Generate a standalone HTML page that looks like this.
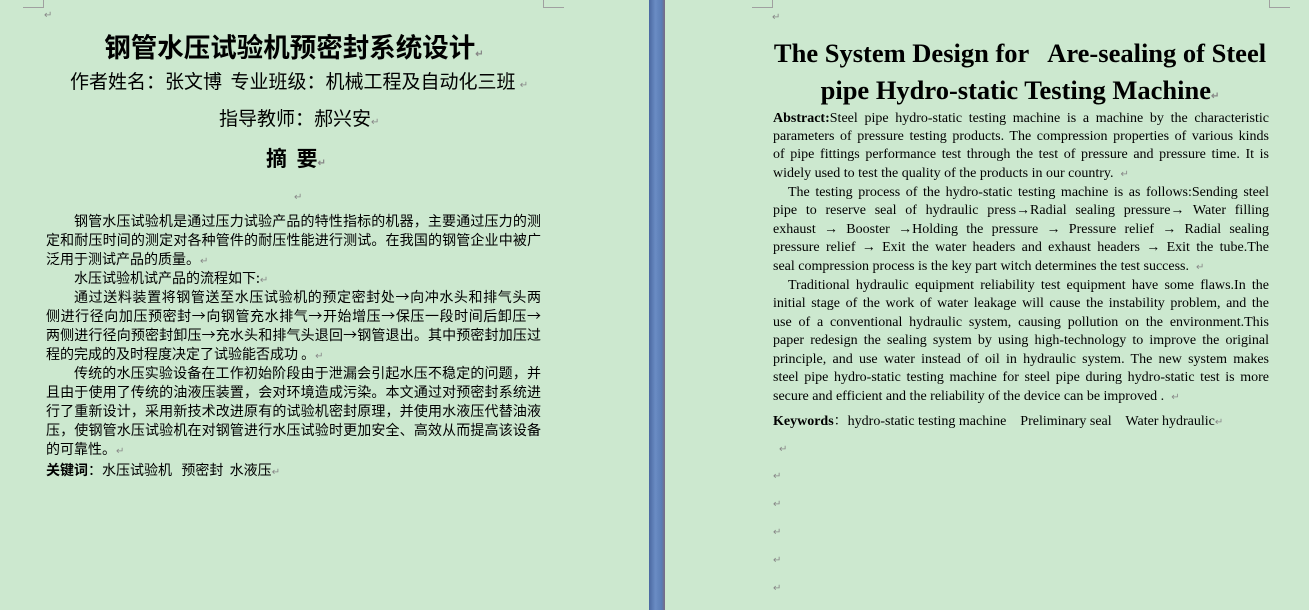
<!DOCTYPE html>
<html><head><meta charset="utf-8"><style>
html,body{margin:0;padding:0;}
body{width:1309px;height:610px;background:#cce8cf;position:relative;overflow:hidden;font-family:"Liberation Sans","Noto Sans CJK SC",sans-serif;color:#000;}
.a{position:absolute;white-space:nowrap;}
.p{color:#888;font-size:10px;}
.l{position:absolute;left:46px;width:495px;font-size:14px;line-height:19px;height:19px;white-space:nowrap;text-align:justify;text-align-last:justify;font-family:"Noto Sans CJK SC",sans-serif;}
.l.nl{text-align-last:left;}
.r{position:absolute;left:773px;width:496px;font-size:14px;line-height:18px;height:18px;white-space:nowrap;text-align:justify;text-align-last:justify;font-family:"Liberation Serif","Noto Serif CJK SC",serif;}
.r.nl{text-align-last:left;}
.c{position:absolute;border-color:#a0a0a0;border-style:solid;width:20px;height:7px;}
</style></head><body>
<div class="c" style="left:23px;top:0;border-width:0 1px 1px 0;"></div>
<div class="c" style="left:543px;top:0;border-width:0 0 1px 1px;"></div>
<div class="c" style="left:752px;top:0;border-width:0 1px 1px 0;"></div>
<div class="c" style="left:1269px;top:0;border-width:0 0 1px 1px;"></div>
<div style="position:absolute;left:649px;top:0;width:16px;height:610px;background:linear-gradient(90deg,#4a68a0,#6a8cc4 40%,#5a7cb4 80%,#7a6a80);"></div>

<div class="a p" style="left:44px;top:10px;">↵</div>
<div class="a" style="left:0;width:588px;top:29px;text-align:center;font-size:26.5px;font-weight:bold;font-family:'Noto Sans CJK SC',sans-serif;line-height:34px;">钢管水压试验机预密封系统设计<span class="p">↵</span></div>
<div class="a" style="left:70px;top:69px;font-size:19px;line-height:24px;font-family:'Noto Sans CJK SC',sans-serif;">作者姓名：张文博&nbsp; 专业班级：机械工程及自动化三班 <span class="p">↵</span></div>
<div class="a" style="left:219px;top:106px;font-size:19px;line-height:24px;font-family:'Noto Sans CJK SC',sans-serif;">指导教师：郝兴安<span class="p">↵</span></div>
<div class="a" style="left:266px;top:144px;font-size:21px;font-weight:bold;line-height:28px;font-family:'Noto Sans CJK SC',sans-serif;">摘&nbsp; 要<span class="p">↵</span></div>
<div class="a p" style="left:294px;top:192px;">↵</div>

<div class="l" style="top:212px;padding-left:28px;width:467px;">钢管水压试验机是通过压力试验产品的特性指标的机器，主要通过压力的测</div>
<div class="l" style="top:231px;">定和耐压时间的测定对各种管件的耐压性能进行测试。在我国的钢管企业中被广</div>
<div class="l nl" style="top:250px;">泛用于测试产品的质量。<span class="p">↵</span></div>
<div class="l nl" style="top:269px;padding-left:28px;width:467px;">水压试验机试产品的流程如下:<span class="p">↵</span></div>
<div class="l" style="top:288px;padding-left:28px;width:467px;">通过送料装置将钢管送至水压试验机的预定密封处→向冲水头和排气头两</div>
<div class="l" style="top:307px;">侧进行径向加压预密封→向钢管充水排气→开始增压→保压一段时间后卸压→</div>
<div class="l" style="top:326px;">两侧进行径向预密封卸压→充水头和排气头退回→钢管退出。其中预密封加压过</div>
<div class="l nl" style="top:345px;">程的完成的及时程度决定了试验能否成功 。<span class="p">↵</span></div>
<div class="l" style="top:364px;padding-left:28px;width:467px;">传统的水压实验设备在工作初始阶段由于泄漏会引起水压不稳定的问题，并</div>
<div class="l" style="top:383px;">且由于使用了传统的油液压装置，会对环境造成污染。本文通过对预密封系统进</div>
<div class="l" style="top:402px;">行了重新设计，采用新技术改进原有的试验机密封原理，并使用水液压代替油液</div>
<div class="l" style="top:421px;">压，使钢管水压试验机在对钢管进行水压试验时更加安全、高效从而提高该设备</div>
<div class="l nl" style="top:440px;">的可靠性。<span class="p">↵</span></div>
<div class="l nl" style="top:461px;"><b>关键词</b>：水压试验机&nbsp;&nbsp; 预密封&nbsp; 水液压<span class="p">↵</span></div>

<div class="a p" style="left:772px;top:12px;">↵</div>
<div class="a" style="left:720px;width:600px;top:36px;text-align:center;font-size:26.5px;font-weight:bold;font-family:'Liberation Serif',serif;line-height:34px;">The System Design for &nbsp; Are-sealing of Steel</div>
<div class="a" style="left:720px;width:600px;top:73px;text-align:center;font-size:26.5px;font-weight:bold;font-family:'Liberation Serif',serif;line-height:34px;">pipe Hydro-static Testing Machine<span class="p">↵</span></div>

<div class="r" style="top:110px;"><b>Abstract:</b>Steel pipe hydro-static testing machine is a machine by the characteristic</div>
<div class="r" style="top:128px;">parameters of pressure testing products. The compression properties of various kinds</div>
<div class="r" style="top:146px;">of pipe fittings performance test through the test of pressure and pressure time. It is</div>
<div class="r nl" style="top:165px;">widely used to test the quality of the products in our country. &nbsp;<span class="p">↵</span></div>
<div class="r" style="top:184px;padding-left:15px;width:481px;">The testing process of the hydro-static testing machine is as follows:Sending steel</div>
<div class="r" style="top:202px;">pipe to reserve seal of hydraulic press→Radial sealing pressure→ Water filling</div>
<div class="r" style="top:221px;">exhaust → Booster →Holding the pressure → Pressure relief → Radial sealing</div>
<div class="r" style="top:239px;">pressure relief → Exit the water headers and exhaust headers → Exit the tube.The</div>
<div class="r nl" style="top:258px;">seal compression process is the key part witch determines the test success. &nbsp;<span class="p">↵</span></div>
<div class="r" style="top:277px;padding-left:15px;width:481px;">Traditional hydraulic equipment reliability test equipment have some flaws.In the</div>
<div class="r" style="top:295px;">initial stage of the work of water leakage will cause the instability problem, and the</div>
<div class="r" style="top:314px;">use of a conventional hydraulic system, causing pollution on the environment.This</div>
<div class="r" style="top:332px;">paper redesign the sealing system by using high-technology to improve the original</div>
<div class="r" style="top:351px;">principle, and use water instead of oil in hydraulic system. The new system makes</div>
<div class="r" style="top:369px;">steel pipe hydro-static testing machine for steel pipe during hydro-static test is more</div>
<div class="r nl" style="top:388px;">secure and efficient and the reliability of the device can be improved . &nbsp;<span class="p">↵</span></div>
<div class="r nl" style="top:413px;"><b>Keywords</b>：hydro-static testing machine &nbsp;&nbsp; Preliminary seal &nbsp;&nbsp; Water hydraulic<span class="p">↵</span></div>

<div class="a p" style="left:779px;top:444px;">↵</div>
<div class="a p" style="left:773px;top:471px;">↵</div>
<div class="a p" style="left:773px;top:499px;">↵</div>
<div class="a p" style="left:773px;top:527px;">↵</div>
<div class="a p" style="left:773px;top:555px;">↵</div>
<div class="a p" style="left:773px;top:583px;">↵</div>
</body></html>
